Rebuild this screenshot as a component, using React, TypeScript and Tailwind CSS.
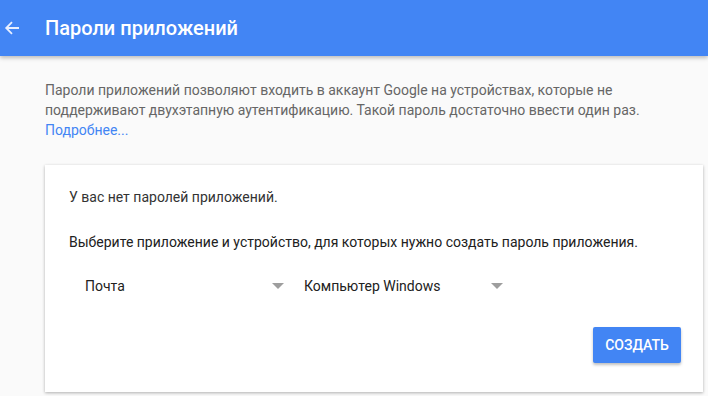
import React from "react";

const Caret = () => (
  <svg width="12" height="6" viewBox="0 0 12 6" className="shrink-0">
    <path d="M0 0 L12 0 L6 6 Z" fill="#9e9e9e" />
  </svg>
);

const Dropdown = ({ label }: { label: string }) => (
  <div className="flex w-[219px] items-center justify-between pl-4 pr-[4px] h-8">
    <span className="text-[14px] text-[#212121]">{label}</span>
    <Caret />
  </div>
);

export default function App() {
  return (
    <div
      className="min-h-[396px] bg-[#fafafa] overflow-hidden"
      style={{ fontFamily: "Roboto, 'Noto Sans', sans-serif" }}
    >
      {/* Header */}
      <header className="flex h-14 items-center bg-[#4285f4] shadow-[0_2px_4px_rgba(0,0,0,0.25)]">
        <button className="ml-[4px] flex h-8 w-4 items-center justify-center text-white">
          <svg width="16" height="16" viewBox="0 0 16 16">
            <path
              d="M15 8 H2.5 M8 2.2 L2.2 8 L8 13.8"
              stroke="#e8efff"
              strokeWidth="1.8"
              fill="none"
            />
          </svg>
        </button>
        <h1 className="ml-[25px] text-[20px] font-medium text-white">Пароли приложений</h1>
      </header>

      <main className="pl-[45px] pt-6">
        <p className="w-[610px] text-[14px] leading-5 text-[#666]">
          Пароли приложений позволяют входить в аккаунт Google на устройствах, которые не
          поддерживают двухэтапную аутентификацию. Такой пароль достаточно ввести один раз.
          <br />
          <a href="#" className="text-[#4285f4]">Подробнее...</a>
        </p>

        <section className="mt-[25px] w-[658px] bg-white pl-6 pr-[22px] pt-[22px] pb-[29px] shadow-[0_1px_3px_rgba(0,0,0,0.3)]">
          <p className="text-[14px] leading-5 text-[#333]">У вас нет паролей приложений.</p>
          <p className="mt-[25px] text-[14px] leading-5 text-[#212121]">
            Выберите приложение и устройство, для которых нужно создать пароль приложения.
          </p>
          <div className="mt-[18px] flex">
            <Dropdown label="Почта" />
            <Dropdown label="Компьютер Windows" />
          </div>
          <div className="mt-[25px] flex justify-end">
            <button className="h-9 w-[88px] rounded-[2px] bg-[#4285f4] text-[14px] font-medium uppercase text-white shadow-[0_2px_3px_rgba(0,0,0,0.25)]">
              Создать
            </button>
          </div>
        </section>
      </main>
    </div>
  );
}
